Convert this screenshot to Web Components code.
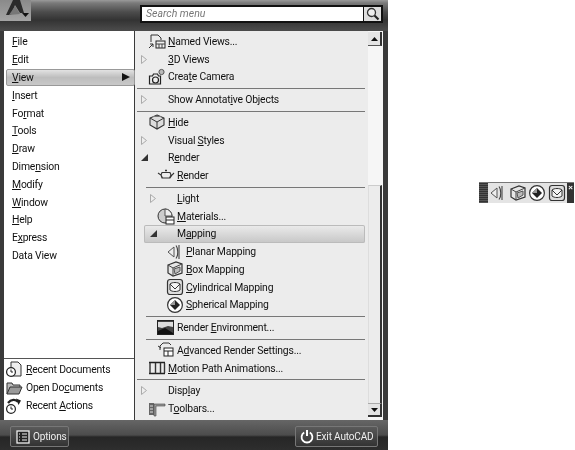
<!DOCTYPE html>
<html>
<head>
<meta charset="utf-8">
<style>
html, body { margin: 0; padding: 0; background: #fff; height: 450px; overflow: hidden; }
body { display: flex; align-items: flex-start; font: 10.4px Roboto, sans-serif; letter-spacing: -.2px; color: #111; }
</style>
</head>
<body>
<app-menu></app-menu>
<float-bar></float-bar>

<script>
const ICONS = {
  named: '<path d="M3 10V3h7l3 3v2" fill="none" stroke="#333"/><path d="M1 16l4-4M2 12h3v3" fill="none" stroke="#333"/><rect x="8" y="9" width="9" height="7" fill="#eee" stroke="#222"/><path d="M8 12h9M11 12v4M14 12v4" stroke="#444"/>',
  camera: '<path d="M1.500 16V8h3l1-2h4l1 2h2v8z" fill="#eee" stroke="#222" stroke-width="1.2"/><circle cx="7.500" cy="12" r="3" fill="none" stroke="#222" stroke-width="1.2"/><circle cx="13.500" cy="4" r="2.600" fill="#bbb" stroke="#555"/>',
  hide: '<path d="M9 2l7 3v7l-7 4-7-4V5z" fill="#ddd" stroke="#333" stroke-width="1.1"/><path d="M2 5l7 4 7-4M9 9v7" fill="none" stroke="#333"/><path d="M5 3.500h8" stroke="#777"/>',
  teapot: '<path d="M1 6l3 2 1 3h8l2-3 2-2M5 5.500h8l1 2.500-1.500 3h-7L4 8z" fill="none" stroke="#333" stroke-width="1.1"/><path d="M8 3.500h2" stroke="#333" stroke-width="1.4"/>',
  materials: '<circle cx="8" cy="9" r="7" fill="#ccc" stroke="#333"/><path d="M8 2a7 7 0 0 1 7 7H8z" fill="#eee" stroke="#555"/><rect x="9" y="10" width="8" height="7" fill="#fff" stroke="#222"/><path d="M9 13h8" stroke="#222"/>',
  planar: '<path d="M2 9l6-5v10z" fill="#eee" stroke="#555"/><path d="M10 2.500c2.400 3 2.400 10 0 13" fill="none" stroke="#444" stroke-width="1.2"/><path d="M13 2v14" stroke="#666" stroke-width="1.4"/>',
  box: '<path d="M2 5l8-3 6 2v9l-9 3-5-3z" fill="#e6e6e6" stroke="#333" stroke-width="1.2"/><path d="M2 5l5 3 9-4M7 8v8" fill="none" stroke="#444"/><path d="M8 9l6-2 0 4-5 3z" fill="#bbb" stroke="#555"/>',
  cylinder: '<rect x="1.500" y="1.500" width="15" height="15" rx="2.500" fill="#ddd" stroke="#333" stroke-width="1.2"/><path d="M4 6c2-2 8-2 10 0v6c-2 2-8 2-10 0z" fill="#f4f4f4" stroke="#333"/><path d="M4 6l5 5 5-5" fill="none" stroke="#333"/>',
  sphere: '<circle cx="9" cy="9" r="7.400" fill="#fff" stroke="#333" stroke-width="1.2"/><path d="M9 4l5 5-5 5-5-5z" fill="#222"/><path d="M9 4v5H4z" fill="#999"/>',
  env: '<rect x="0.500" y="1.500" width="16" height="14" fill="#444" stroke="#222"/><path d="M1 3h15v5l-5-1-6 2-4-1z" fill="#ddd"/><path d="M1 12l7-3 8 5v1H1z" fill="#111"/>',
  advanced: '<path d="M1 5l3 2M3 9V5l3-3h6l2 2" fill="none" stroke="#333"/><rect x="7" y="7" width="9" height="8" fill="#fff" stroke="#222"/><path d="M7 10h9M11 10v5" stroke="#222"/>',
  motion: '<path d="M1 3.500h16M1 14.500h16" stroke="#222" stroke-width="1.4"/><path d="M2 4v10M7.500 4v10M12.500 4v10M16.500 4v10" stroke="#333" stroke-width="1.4"/>',
  toolbars: '<path d="M1 3h5v12H1z" fill="#666"/><path d="M6 4h11v2H8v10H6z" fill="#999" stroke="#444" stroke-width=".6"/><path d="M2 6h3M2 9h3M2 12h3" stroke="#ddd"/>',
  recentdoc: '<path d="M6 2h7l3 3v11H6z" fill="#eee" stroke="#333"/><circle cx="6" cy="12" r="4.400" fill="#fff" stroke="#222" stroke-width="1.2"/><path d="M6 9.500V12h2" fill="none" stroke="#222"/>',
  opendoc: '<path d="M2 15V4h5l1 2h7v2" fill="#bbb" stroke="#333"/><path d="M2 15l3-7h12l-3 7z" fill="#999" stroke="#333"/>',
  recentact: '<circle cx="6" cy="12" r="4.400" fill="#fff" stroke="#222" stroke-width="1.2"/><path d="M6 9.500V12h2" fill="none" stroke="#222"/><path d="M3 6c3-4 8-4 10-1" fill="none" stroke="#222" stroke-width="2.2"/><path d="M11 1.500l5 2-2.500 4.500z" fill="#222"/>'
}

function icon(name, size) {
  return `<svg width="${size}" height="${size}" viewBox="0 0 18 18">${ICONS[name]}</svg>`
}

class AppMenu extends HTMLElement {
  constructor() {
    super()
    this.attachShadow({mode: 'open'})
    this.shadowRoot.innerHTML = `
    <style>
    :host { display: flex; flex-direction: column; width: 388px; height: 450px; flex: none;
      background: #3a3a3a; filter: blur(.3px); }
    .body { display: flex; flex: 1; min-height: 0; padding: 0 5px 0 4px; gap: 1px; }
    </style>
    <menu-head></menu-head>
    <div class="body">
      <main-list></main-list>
      <sub-list></sub-list>
    </div>
    <menu-foot></menu-foot>
    `
  }
}

class MenuHead extends HTMLElement {
  constructor() {
    super()
    this.attachShadow({mode: 'open'})
    this.shadowRoot.innerHTML = `
    <style>
    :host { display: flex; height: 31px; flex: none; box-sizing: border-box; padding-top: 5px;
      justify-content: space-between; background: linear-gradient(#9a9a9a 0, #7a7a7a 3px, #4c4c4c 12px, #333 20px, #4a4a4a 30px); }
    .logo { width: 31px; height: 21px; margin-top: -5px; background: linear-gradient(#8a8a8a, #a4a4a4); }
    .search { display: flex; width: 243px; height: 18px; margin-right: 5px; box-sizing: border-box; border: 2px solid #111; background: #fff; }
    .search span { flex: 1; padding-left: 4px; font: italic 10.5px/14px Roboto, sans-serif; letter-spacing: 0; color: #777; }
    .go { width: 17px; background: #ddd; border-left: 1px solid #111; display: flex; align-items: center; justify-content: center; }
    </style>
    <div class="logo">
      <svg width="31" height="21" viewBox="0 0 31 21"><path d="M6 15L13 0h7l4 13h-4l-5-8-4 10z" fill="#2b2b2b"/><path d="M9 15l6-9 5 8z" fill="#777"/><path d="M22 13h7l-3.500 4z" fill="#111"/></svg>
    </div>
    <div class="search">
      <span>Search menu</span>
      <div class="go"><svg width="14" height="14" viewBox="0 0 14 14"><circle cx="5.500" cy="5.500" r="4" fill="#eee" stroke="#333" stroke-width="1.3"/><path d="M8.500 8.500l4 4" stroke="#222" stroke-width="2.2"/></svg></div>
    </div>
    `
  }
}

class MainList extends HTMLElement {
  constructor() {
    super()
    this.attachShadow({mode: 'open'})
    const items = [['F','ile'],['E','dit'],['V','iew'],['I','nsert'],['Fo','r','mat'],['T','ools'],['D','raw'],['Dime','n','sion'],['M','odify'],['W','indow'],['H','elp'],['E','x','press'],['Data View']]
    const rows = items.map((it, i) => {
      let txt
      if (it.length === 1) txt = it[0]
      else if (it.length === 2) txt = `<u>${it[0]}</u>${it[1]}`
      else txt = `${it[0]}<u>${it[1]}</u>${it[2]}`
      return `<div class="item ${i === 2 ? 'sel' : ''}"><span>${txt}</span>${i === 2 ? '<b></b>' : ''}</div>`
    }).join('')
    const bottom = [['recentdoc','<u>R</u>ecent Documents'],['opendoc','Open Do<u>c</u>uments'],['recentact','Recent <u>A</u>ctions']]
      .map(b => `<div class="rec">${icon(b[0], 18)}<span>${b[1]}</span></div>`).join('')
    this.shadowRoot.innerHTML = `
    <style>
    :host { display: flex; flex-direction: column; width: 130px; flex: none; background: #fff; box-sizing: border-box; padding-top: 2px; }
    .items { flex: 1; padding-left: 2px; }
    .item { display: flex; align-items: center; justify-content: space-between; height: 17.8px; padding-left: 6px; box-sizing: border-box; }
    .sel { background: linear-gradient(#e2e2e2, #bdbdbd 50%, #c8c8c8); border: 1px solid #999; border-radius: 2px; padding-left: 5px; margin-right: -1px; }
    .sel b { width: 0; height: 0; border-left: 8px solid #111; border-top: 4px solid transparent; border-bottom: 4px solid transparent; margin-right: 4px; }
    .recent { border-top: 1px solid #555; padding: 1px 0 5px 1px; background: #fff; }
    .rec { display: flex; align-items: center; height: 18.3px; gap: 3px; }
    u { text-underline-offset: 1px; }
    </style>
    <div class="items">${rows}</div>
    <div class="recent">${bottom}</div>
    `
  }
}

class SubRow extends HTMLElement {
  constructor() {
    super()
    this.attachShadow({mode: 'open'})
  }
  connectedCallback() {
    const ico = this.getAttribute('ico')
    const arrow = this.getAttribute('arrow')
    const indent = this.getAttribute('indent') || 0
    let arrowHtml = ''
    if (arrow === 'right') arrowHtml = '<svg width="6" height="9" viewBox="0 0 6 9"><path d="M.5.5l5 4-5 4z" fill="#eee" stroke="#aaa"/></svg>'
    if (arrow === 'down') arrowHtml = '<svg width="7" height="7" viewBox="0 0 7 7"><path d="M7 0v7H0z" fill="#333"/></svg>'
    this.shadowRoot.innerHTML = `
    <style>
    :host { display: flex; align-items: center; height: 17.75px; box-sizing: border-box; margin-left: calc(${indent} * 9px); }
    :host([hot]) { background: linear-gradient(#ececec, #c6c6c6); box-shadow: inset 0 0 0 1px #bbb; border-radius: 2px; margin-right: 1px; }
    .ar { width: 8px; flex: none; display: flex; align-items: center; justify-content: center; margin-left: 5px; }
    .ic { width: 18px; flex: none; display: flex; align-items: center; justify-content: center; margin-right: 2px; }
    </style>
    <div class="ar">${arrowHtml}</div>
    <div class="ic">${ico ? icon(ico, 18) : ''}</div>
    <span><slot></slot></span>
    `
  }
}

class SubSep extends HTMLElement {
  constructor() {
    super()
    this.attachShadow({mode: 'open'})
    this.shadowRoot.innerHTML = `
    <style>
    :host { display: block; height: 1px; margin: 2px 1px 2px 2px; background: #777; }
    :host([in]) { margin-left: 11px; }
    </style>
    `
  }
}

class SubList extends HTMLElement {
  constructor() {
    super()
    this.attachShadow({mode: 'open'})
    this.shadowRoot.innerHTML = `
    <style>
    :host { display: flex; flex: 1; background: #ececec; min-width: 0; }
    .rows { flex: 1; padding: 1.5px 2px 0 0; min-width: 0; }
    </style>
    <div class="rows"><slot></slot></div>
    <scroll-bar></scroll-bar>
    `
    this.innerHTML = `
    <sub-row ico="named"><u>N</u>amed Views...</sub-row>
    <sub-row arrow="right"><u>3</u>D Views</sub-row>
    <sub-row ico="camera">Crea<u>t</u>e Camera</sub-row>
    <sub-sep></sub-sep>
    <sub-row arrow="right">Show Annotat<u>i</u>ve Objects</sub-row>
    <sub-sep></sub-sep>
    <sub-row ico="hide"><u>H</u>ide</sub-row>
    <sub-row arrow="right">Visual <u>S</u>tyles</sub-row>
    <sub-row arrow="down">R<u>e</u>nder</sub-row>
    <sub-row ico="teapot" indent="1"><u>R</u>ender</sub-row>
    <sub-sep in></sub-sep>
    <sub-row arrow="right" indent="1"><u>L</u>ight</sub-row>
    <sub-row ico="materials" indent="1"><u>M</u>aterials...</sub-row>
    <sub-row arrow="down" indent="1" hot>M<u>a</u>pping</sub-row>
    <sub-row ico="planar" indent="2"><u>P</u>lanar Mapping</sub-row>
    <sub-row ico="box" indent="2"><u>B</u>ox Mapping</sub-row>
    <sub-row ico="cylinder" indent="2"><u>C</u>ylindrical Mapping</sub-row>
    <sub-row ico="sphere" indent="2"><u>S</u>pherical Mapping</sub-row>
    <sub-sep in></sub-sep>
    <sub-row ico="env" indent="1">Render <u>E</u>nvironment...</sub-row>
    <sub-sep in></sub-sep>
    <sub-row ico="advanced" indent="1">A<u>d</u>vanced Render Settings...</sub-row>
    <sub-row ico="motion"><u>M</u>otion Path Animations...</sub-row>
    <sub-sep></sub-sep>
    <sub-row arrow="right">Disp<u>l</u>ay</sub-row>
    <sub-row ico="toolbars">T<u>o</u>olbars...</sub-row>
    `
  }
}

class ScrollBar extends HTMLElement {
  constructor() {
    super()
    this.attachShadow({mode: 'open'})
    this.shadowRoot.innerHTML = `
    <style>
    :host { display: flex; flex-direction: column; width: 15px; flex: none; background: #f6f6f6; box-sizing: border-box; padding: 1px 0 3px; }
    .btn { height: 14px; flex: none; background: #e4e4e4; border-right: 2px solid #333; border-bottom: 1px solid #555; margin-right: 1px; box-sizing: border-box; display: flex; align-items: center; justify-content: center; }
    .btn.dn { border-bottom: 2px solid #333; border-top: 1px solid #aaa; }
    .gap { height: 139px; flex: none; }
    .thumb { flex: 1; background: #ececec; border-right: 2px solid #333; border-left: 1px solid #ddd; border-top: 1px solid #ccc; margin-right: 1px; }
    svg { display: block; }
    </style>
    <div class="btn"><svg width="7" height="4" viewBox="0 0 7 4"><path d="M3.500 0L7 4H0z" fill="#111"/></svg></div>
    <div class="gap"></div>
    <div class="thumb"></div>
    <div class="btn dn"><svg width="7" height="4" viewBox="0 0 7 4"><path d="M3.500 4L7 0H0z" fill="#111"/></svg></div>
    `
  }
}

class MenuFoot extends HTMLElement {
  constructor() {
    super()
    this.attachShadow({mode: 'open'})
    this.shadowRoot.innerHTML = `
    <style>
    :host { display: flex; justify-content: space-between; align-items: center; height: 30px; flex: none; box-sizing: border-box;
      padding: 3px 10px 0 10px; background: linear-gradient(#666 0, #4c4c4c 15px, #262626 17px, #2e2e2e 30px); color: #eee; font-size: 10px; letter-spacing: -.15px; }
    .b { display: flex; align-items: center; height: 21px; box-sizing: border-box; border: 1px solid #777; border-radius: 2px; background: linear-gradient(#5a5a5a, #333); white-space: nowrap; }
    .b svg { flex: none; }
    .opt { padding-left: 5px; width: 59px; gap: 3px; }
    .exit { padding-left: 4px; width: 83px; gap: 2px; }
    </style>
    <div class="b opt">
      <svg width="14" height="14" viewBox="0 0 14 14"><rect x="1" y="1" width="12" height="12" fill="#222" stroke="#eee" stroke-width="1.3"/><path d="M3 4h1M6 4h5M3 7h1M6 7h5M3 10h1M6 10h5" stroke="#eee"/></svg>
      <span>Options</span>
    </div>
    <div class="b exit">
      <svg width="14" height="15" viewBox="0 0 14 15"><path d="M4.200 3.500a5.400 5.400 0 1 0 5.600 0" fill="none" stroke="#fff" stroke-width="1.8"/><path d="M7 1v6" stroke="#fff" stroke-width="2"/></svg>
      <span>Exit AutoCAD</span>
    </div>
    `
  }
}

class FloatBar extends HTMLElement {
  constructor() {
    super()
    this.attachShadow({mode: 'open'})
    this.shadowRoot.innerHTML = `
    <style>
    :host { display: flex; flex: none; width: 95px; height: 21px; margin: 182px 0 0 91px; background: #e4e4e4; box-sizing: border-box; border-top: 1px solid #777; filter: blur(.3px); }
    .grip { width: 9px; background: repeating-linear-gradient(#333 0 1px, #555 1px 2px); }
    .tools { flex: 1; display: flex; align-items: center; justify-content: space-between; padding: 0 1px; }
    .x { width: 7px; background: #333; color: #fff; font: bold 8px/9px "Liberation Sans", sans-serif; text-align: center; }
    </style>
    <div class="grip"></div>
    <div class="tools">${icon('planar', 18)}${icon('box', 18)}${icon('sphere', 18)}${icon('cylinder', 18)}</div>
    <div class="x">×</div>
    `
  }
}

customElements.define('app-menu', AppMenu)
customElements.define('menu-head', MenuHead)
customElements.define('main-list', MainList)
customElements.define('sub-row', SubRow)
customElements.define('sub-sep', SubSep)
customElements.define('sub-list', SubList)
customElements.define('scroll-bar', ScrollBar)
customElements.define('menu-foot', MenuFoot)
customElements.define('float-bar', FloatBar)
</script>
</body>
</html>
